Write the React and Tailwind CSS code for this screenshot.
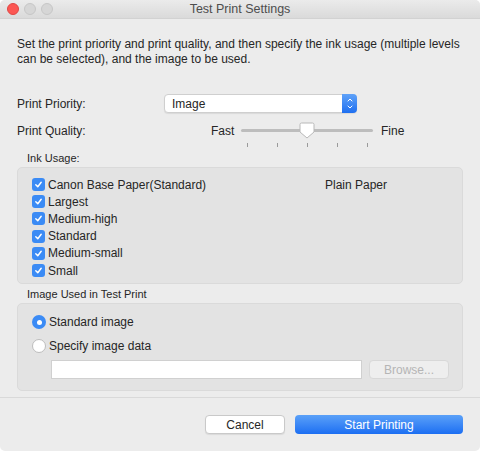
import { ChevronUp, ChevronDown } from 'lucide-react';

const FONT = { fontFamily: '"Liberation Sans", Arial, sans-serif' };

const INKS = ['Canon Base Paper(Standard)', 'Largest', 'Medium-high', 'Standard', 'Medium-small', 'Small'];

function Check() {
  return (
    <span className="w-[13px] h-[13px] rounded-[3px] bg-[#3b8bf5] flex items-center justify-center shrink-0">
      <svg width="9" height="9" viewBox="0 0 10 10">
        <path d="M2 5.2 L4.2 7.5 L8 2.5" fill="none" stroke="white" strokeWidth="1.6" strokeLinecap="round" strokeLinejoin="round" />
      </svg>
    </span>
  );
}

function Radio({ on }) {
  return on ? (
    <span className="w-[14px] h-[14px] rounded-full bg-[#3b8bf5] flex items-center justify-center shrink-0">
      <span className="w-[5px] h-[5px] rounded-full bg-white" />
    </span>
  ) : (
    <span className="w-[14px] h-[14px] rounded-full bg-white border border-[#bdbdbd] shrink-0" />
  );
}

export default function App() {
  return (
    <div className="w-[480px] h-[451px] bg-[#ececec] text-[#262626] flex flex-col overflow-hidden rounded-[5px]" style={FONT}>
      {/* title bar */}
      <div className="h-[19px] shrink-0 flex items-center relative border-b border-[#d2d2d2] bg-gradient-to-b from-[#ebebeb] to-[#dadada]">
        <div className="flex gap-[5px] pl-[7px]">
          <span className="w-[12px] h-[12px] rounded-full bg-[#fc5753] border border-[#df4744]" />
          <span className="w-[12px] h-[12px] rounded-full bg-[#d6d6d6] border border-[#c6c6c6]" />
          <span className="w-[12px] h-[12px] rounded-full bg-[#d6d6d6] border border-[#c6c6c6]" />
        </div>
        <div className="absolute inset-0 flex items-center justify-center text-[12.5px] text-[#4d4d4d]">Test Print Settings</div>
      </div>

      <div className="px-[17px] pt-[18px] text-[12px] leading-[15px]">
        Set the print priority and print quality, and then specify the ink usage (multiple levels can be selected), and the image to be used.
      </div>

      {/* priority */}
      <div className="flex items-center px-[17px] mt-[27px] text-[12px]">
        <span className="w-[147px]">Print Priority:</span>
        <div className="w-[193px] h-[19px] bg-white rounded-[4px] border border-[#cfcfcf] flex items-center shadow-[0_1px_1px_rgba(0,0,0,0.08)]">
          <span className="flex-1 pl-[7px]">Image</span>
          <span className="w-[15px] h-[19px] -mr-px rounded-r-[4px] bg-gradient-to-b from-[#5fa2f8] to-[#1e6ff0] flex flex-col items-center justify-center">
            <ChevronUp size={8} strokeWidth={3} color="white" className="-mb-[1px]" />
            <ChevronDown size={8} strokeWidth={3} color="white" />
          </span>
        </div>
      </div>

      {/* quality */}
      <div className="flex items-start px-[17px] mt-[8px] text-[12px]">
        <span className="w-[194px] leading-[20px]">Print Quality:</span>
        <span className="leading-[20px] w-[30px]">Fast</span>
        <div className="w-[132px] relative h-[30px]">
          <div className="absolute left-0 right-0 top-[8px] h-[3px] rounded bg-[#bdbdbd]" />
          <svg className="absolute left-[58px] top-[1px]" width="16" height="17" viewBox="0 0 16 17">
            <path d="M2.5 1 H13.5 Q15 1 15 2.5 V10 L8 16 L1 10 V2.5 Q1 1 2.5 1 Z" fill="white" stroke="#b8b8b8" strokeWidth="1" />
          </svg>
          <div className="absolute left-[6px] right-[5px] top-[22px] flex justify-between">
            {[0, 1, 2, 3, 4].map(i => <span key={i} className="w-px h-[4px] bg-[#9a9a9a]" />)}
          </div>
        </div>
        <span className="leading-[20px] ml-[8px]">Fine</span>
      </div>

      {/* ink usage */}
      <div className="px-[17px] mt-[1px]">
        <div className="text-[11px] pl-[10px] leading-[13px] mb-[2px]">Ink Usage:</div>
        <div className="h-[117px] rounded-[5px] bg-[#e3e3e3] border border-[#dadada] pl-[14px] pt-[9px] flex text-[12px]">
          <div className="flex flex-col gap-[2px] w-[293px]">
            {INKS.map(t => (
              <div key={t} className="flex items-center gap-[3px] h-[15.2px]">
                <Check />
                <span>{t}</span>
              </div>
            ))}
          </div>
          <div className="leading-[16px]">Plain Paper</div>
        </div>
      </div>

      {/* image used */}
      <div className="px-[17px] mt-[4px]">
        <div className="text-[11px] pl-[10px] leading-[13px] mb-[2px]">Image Used in Test Print</div>
        <div className="h-[88px] rounded-[5px] bg-[#e3e3e3] border border-[#dadada] pl-[14px] pr-[13px] pt-[10px] text-[12px]">
          <div className="flex items-center gap-[3px] h-[16px]">
            <Radio on />
            <span>Standard image</span>
          </div>
          <div className="flex items-center gap-[3px] h-[16px] mt-[8px]">
            <Radio />
            <span>Specify image data</span>
          </div>
          <div className="flex items-center gap-[7px] mt-[6px] pl-[19px]">
            <div className="flex-1 h-[19px] bg-white border border-[#d0d0d0]" />
            <div className="w-[80px] h-[19px] rounded-[4px] bg-[#eeeeee] border border-[#d8d8d8] flex items-center justify-center text-[#b5b5b5]">Browse...</div>
          </div>
        </div>
      </div>

      <div className="h-px bg-[#d9d9d9] mt-[6px]" />

      {/* buttons */}
      <div className="flex justify-end gap-[10px] pr-[17px] mt-[17px] text-[12px]">
        <div className="w-[80px] h-[19px] rounded-[4px] bg-white border border-[#c9c9c9] flex items-center justify-center shadow-[0_1px_1px_rgba(0,0,0,0.08)]">Cancel</div>
        <div className="w-[168px] h-[19px] rounded-[4px] bg-gradient-to-b from-[#5aa0f8] to-[#1b6ef2] text-white flex items-center justify-center">Start Printing</div>
      </div>
    </div>
  );
}
